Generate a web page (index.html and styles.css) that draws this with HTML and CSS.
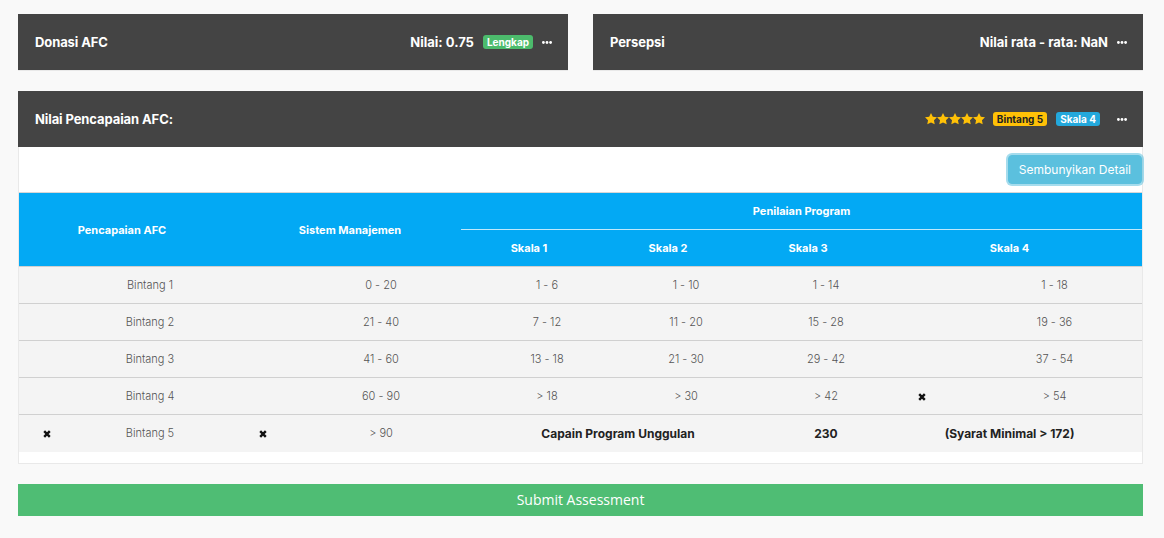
FILE: index.html
```html
<!DOCTYPE html>
<html lang="id">
<head>
<meta charset="utf-8">
<title>Penilaian AFC</title>
<link rel="stylesheet" href="styles.css">
</head>
<body>
<div class="top-row">
  <div class="card">
    <div class="card-head">
      <span class="title">Donasi AFC</span>
      <span class="head-right">
        <span class="value">Nilai: 0.75</span>
        <span class="badge badge-green">Lengkap</span>
        <svg class="dots" viewBox="0 0 10 3" width="10" height="3"><circle cx="1.4" cy="1.5" r="1.4"/><circle cx="5" cy="1.5" r="1.4"/><circle cx="8.6" cy="1.5" r="1.4"/></svg>
      </span>
    </div>
  </div>
  <div class="card">
    <div class="card-head">
      <span class="title">Persepsi</span>
      <span class="head-right">
        <span class="value">Nilai rata - rata: NaN</span>
        <svg class="dots" viewBox="0 0 10 3" width="10" height="3"><circle cx="1.4" cy="1.5" r="1.4"/><circle cx="5" cy="1.5" r="1.4"/><circle cx="8.6" cy="1.5" r="1.4"/></svg>
      </span>
    </div>
  </div>
</div>

<div class="card big">
  <div class="card-head">
    <span class="title">Nilai Pencapaian AFC:</span>
    <span class="head-right">
      <span class="stars">
        <svg viewBox="1.5 1.5 21 21" width="12" height="12"><path d="M12 1.5l3.2 6.6 7.3 1-5.3 5.1 1.3 7.2L12 18l-6.5 3.4 1.3-7.2L1.5 9.1l7.3-1z"/></svg>
        <svg viewBox="1.5 1.5 21 21" width="12" height="12"><path d="M12 1.5l3.2 6.6 7.3 1-5.3 5.1 1.3 7.2L12 18l-6.5 3.4 1.3-7.2L1.5 9.1l7.3-1z"/></svg>
        <svg viewBox="1.5 1.5 21 21" width="12" height="12"><path d="M12 1.5l3.2 6.6 7.3 1-5.3 5.1 1.3 7.2L12 18l-6.5 3.4 1.3-7.2L1.5 9.1l7.3-1z"/></svg>
        <svg viewBox="1.5 1.5 21 21" width="12" height="12"><path d="M12 1.5l3.2 6.6 7.3 1-5.3 5.1 1.3 7.2L12 18l-6.5 3.4 1.3-7.2L1.5 9.1l7.3-1z"/></svg>
        <svg viewBox="1.5 1.5 21 21" width="12" height="12"><path d="M12 1.5l3.2 6.6 7.3 1-5.3 5.1 1.3 7.2L12 18l-6.5 3.4 1.3-7.2L1.5 9.1l7.3-1z"/></svg>
      </span>
      <span class="badge badge-yellow">Bintang 5</span>
      <span class="badge badge-blue">Skala 4</span>
      <svg class="dots dots-wide" viewBox="0 0 10 3" width="10" height="3"><circle cx="1.4" cy="1.5" r="1.4"/><circle cx="5" cy="1.5" r="1.4"/><circle cx="8.6" cy="1.5" r="1.4"/></svg>
    </span>
  </div>
  <div class="card-body">
    <div class="toolbar">
      <button class="btn-info" type="button">Sembunyikan Detail</button>
    </div>
    <table class="score">
      <colgroup>
        <col class="c0"><col class="c1"><col class="c2"><col class="c3"><col class="c4"><col class="c5"><col class="c6"><col class="c7"><col class="c8">
      </colgroup>
      <thead>
        <tr>
          <th colspan="2" rowspan="2">Pencapaian AFC</th>
          <th colspan="2" rowspan="2" class="th-sm">Sistem Manajemen</th>
          <th colspan="5">Penilaian Program</th>
        </tr>
        <tr class="sub">
          <th>Skala 1</th>
          <th>Skala 2</th>
          <th>Skala 3</th>
          <th colspan="2">Skala 4</th>
        </tr>
      </thead>
      <tbody>
        <tr><td></td><td>Bintang 1</td><td></td><td>0 - 20</td><td class="sh">1 - 6</td><td class="sh">1 - 10</td><td class="sh">1 - 14</td><td></td><td>1 - 18</td></tr>
        <tr><td></td><td>Bintang 2</td><td></td><td>21 - 40</td><td class="sh">7 - 12</td><td class="sh">11 - 20</td><td class="sh">15 - 28</td><td></td><td>19 - 36</td></tr>
        <tr><td></td><td>Bintang 3</td><td></td><td>41 - 60</td><td class="sh">13 - 18</td><td class="sh">21 - 30</td><td class="sh">29 - 42</td><td></td><td>37 - 54</td></tr>
        <tr><td></td><td>Bintang 4</td><td></td><td>60 - 90</td><td class="sh">&gt; 18</td><td class="sh">&gt; 30</td><td class="sh">&gt; 42</td><td><svg class="x" viewBox="0 0 8 8" width="8" height="8"><path d="M1.2 1.2L6.8 6.8M6.8 1.2L1.2 6.8"/></svg></td><td>&gt; 54</td></tr>
        <tr class="last"><td><svg class="x" viewBox="0 0 8 8" width="8" height="8"><path d="M1.2 1.2L6.8 6.8M6.8 1.2L1.2 6.8"/></svg></td><td>Bintang 5</td><td><svg class="x" viewBox="0 0 8 8" width="8" height="8"><path d="M1.2 1.2L6.8 6.8M6.8 1.2L1.2 6.8"/></svg></td><td>&gt; 90</td><td colspan="2" class="sh strong">Capain Program Unggulan</td><td class="sh strong">230</td><td colspan="2" class="strong">(Syarat Minimal &gt; 172)</td></tr>
      </tbody>
    </table>
  </div>
</div>

<button class="submit" type="button">Submit Assessment</button>
</body>
</html>
```

FILE: styles.css
```css
* { box-sizing: border-box; }

html, body {
  margin: 0;
  background: #f9f9f9;
}

body {
  padding: 14px 21px 20px 18px;
  font-family: Inter, "Open Sans", "Liberation Sans", sans-serif;
  color: #333;
}

.top-row {
  display: grid;
  grid-template-columns: 1fr 1fr;
  gap: 25px;
}

.card {
  background: #fff;
  border: 1px solid #e9e9e9;
}

.card-head {
  height: 56px;
  background: #444444;
  color: #fff;
  display: flex;
  align-items: center;
  justify-content: space-between;
  padding: 0 16px 0 17px;
  margin: -1px -1px 0;
}

.title {
  font-weight: 700;
  font-size: 13px;
  letter-spacing: -0.1px;
}

.head-right {
  display: flex;
  align-items: center;
  font-weight: 700;
  font-size: 13px;
}

.value { margin-right: 9px; }

.dots {
  fill: #fff;
  margin-left: 9px;
}

.dots-wide { margin-left: 17px; }

.head-right .value + .dots { margin-left: 0; }

.badge {
  display: inline-block;
  font-size: 10px;
  font-weight: 700;
  line-height: 14px;
  padding: 0 4px;
  border-radius: 3px;
}

.badge-green { background: #4cbb6c; color: #fff; }
.badge-yellow { background: #ffc107; color: #222; margin-right: 9px; }
.badge-blue { background: #23a8dc; color: #fff; }

.stars {
  display: flex;
  fill: #ffc107;
  margin-right: 8px;
}

.big { margin-top: 20px; }

.card-body {
  padding: 0 0 11px;
}

.toolbar {
  display: flex;
  justify-content: flex-end;
  padding: 8px 0 8px;
}

.btn-info {
  font-family: inherit;
  font-size: 12px;
  color: #fff;
  background: #5bc0de;
  border: 1px solid #5bc0de;
  border-radius: 4px;
  height: 29px;
  padding: 0 10px;
  box-shadow: 0 0 0 2px rgba(91, 192, 222, 0.55);
}

.score {
  width: 100%;
  border-collapse: collapse;
  table-layout: fixed;
  font-size: 11px;
}

.c0 { width: 56px; }
.c1 { width: 150px; }
.c2 { width: 76px; }
.c3 { width: 160px; }
.c4 { width: 136px; }
.c5 { width: 142px; }
.c6 { width: 138px; }
.c7 { width: 90px; }
.c8 { width: 175px; }

.score thead {
  background: #03a9f4;
  color: #fff;
}

.score th {
  height: 37px;
  padding: 0;
  font-weight: 700;
  font-size: 11px;
  text-align: center;
  border-top: 1px solid #d7d7d7;
}

.score .sub th { border-top: 1px solid rgba(255, 255, 255, 0.75); }

.score .th-sm { padding-left: 14px; }

.score td {
  height: 37px;
  padding: 0;
  text-align: center;
  background: #f4f4f4;
  border-top: 1px solid #d0d0d0;
  color: #555;
  font-weight: 300;
}

.score td.sh { padding-left: 36px; }

.score td.strong {
  font-weight: 700;
  font-size: 12px;
  color: #222;
}

.x {
  display: inline-block;
  vertical-align: middle;
  stroke: #111;
  stroke-width: 2.4;
  fill: none;
}

.submit {
  display: block;
  width: 100%;
  margin-top: 20px;
  height: 32px;
  border: 0;
  background: #4fbd74;
  color: #fff;
  font-family: "Open Sans", "Liberation Sans", sans-serif;
  font-size: 14px;
}
```
